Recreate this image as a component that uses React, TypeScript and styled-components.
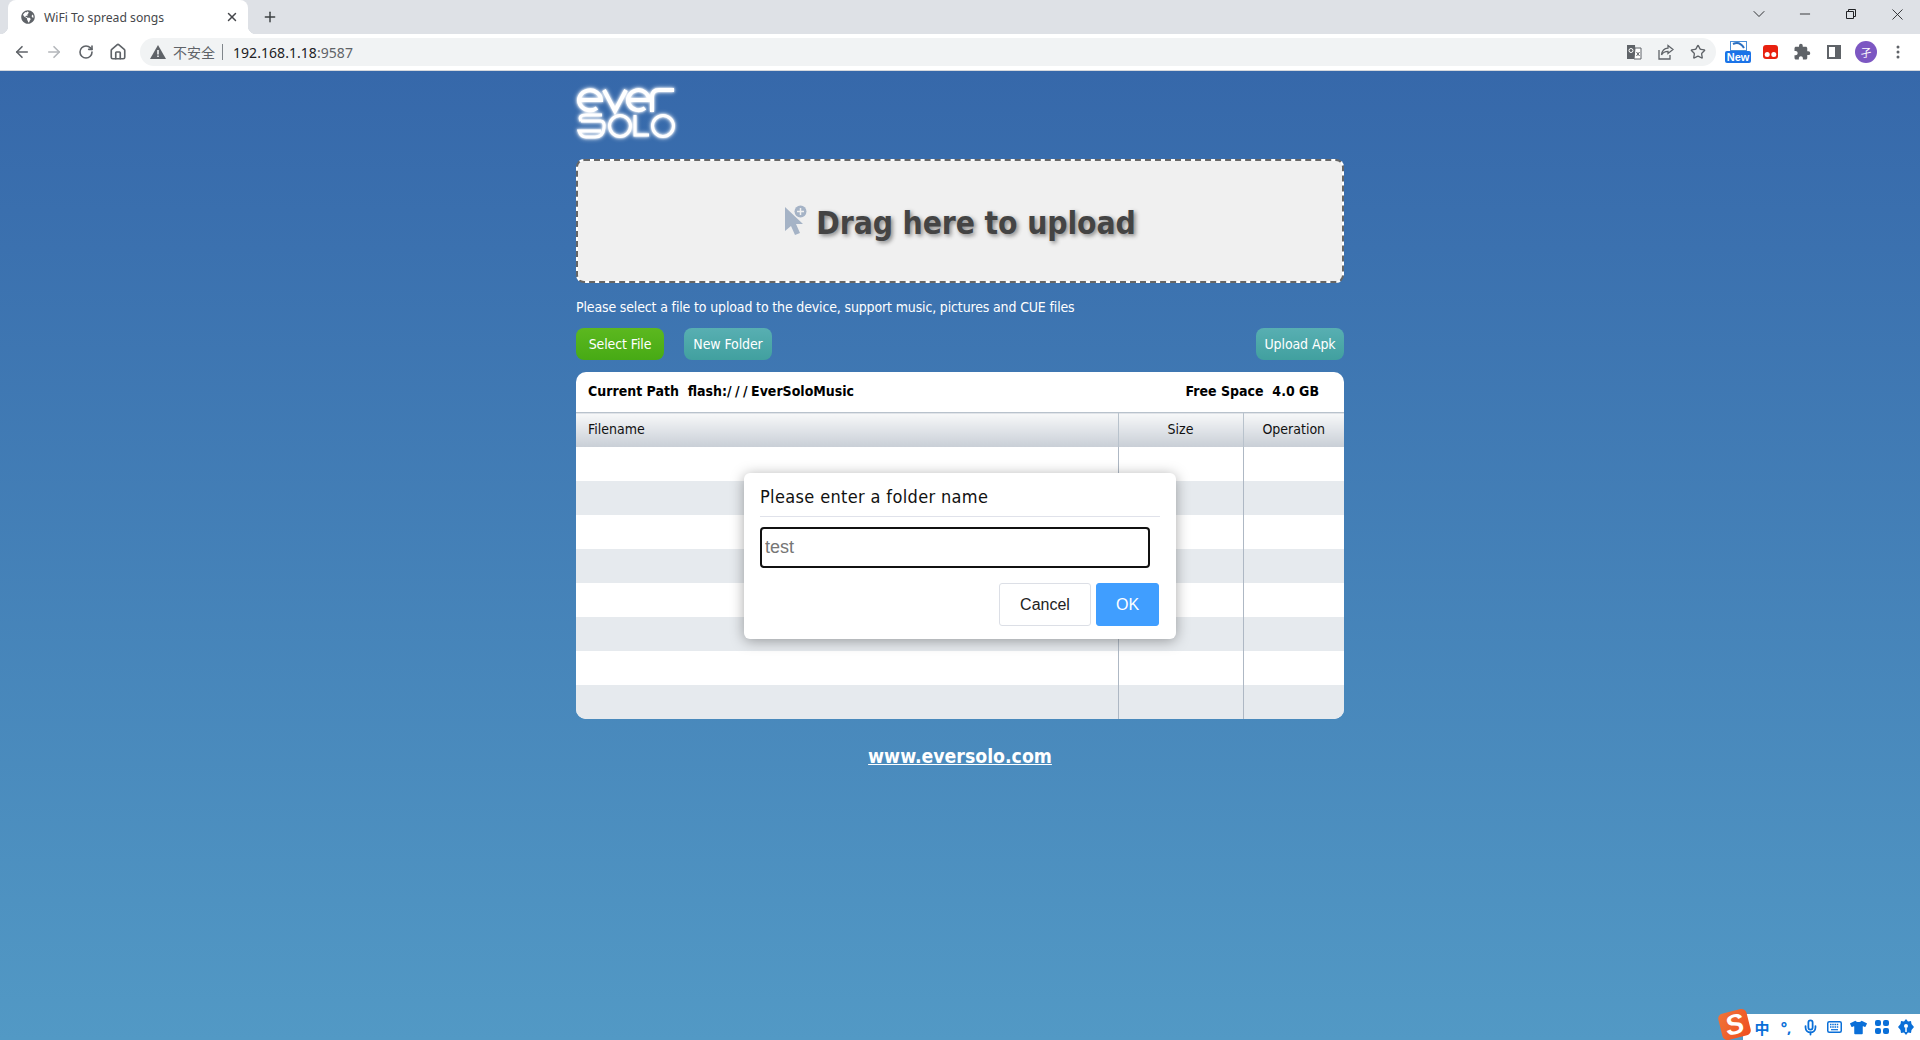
import React from 'react';
import styled, { createGlobalStyle } from 'styled-components';
import { ArrowLeft, ArrowRight, RotateCw, Home, Star, X, Plus, Minus, ChevronDown, Mic } from 'lucide-react';
import { FaGlobeAmericas, FaTshirt } from 'react-icons/fa';
import { MdExtension } from 'react-icons/md';

const GlobalStyle = createGlobalStyle`
	html, body {
		margin: 0;
		padding: 0;
		height: 100%;
		overflow: hidden;
	}
	#root {
		height: 100%;
	}
`;

const pageFont = `'DejaVu Sans', Tahoma, sans-serif`;
const chromeFont = `'Noto Sans', 'Noto Sans CJK SC', sans-serif`;
const arialFont = `'Liberation Sans', Arial, sans-serif`;

const Screen = styled.div`
	display: flex;
	flex-direction: column;
	height: 1040px;
	position: relative;
`;

/* browser chrome */
const TabStrip = styled.div`
	background: #dee1e6;
	display: flex;
	align-items: center;
	height: 34px;
	flex: none;
`;
const Tab = styled.div`
	align-self: stretch;
	background: #fff;
	border-radius: 8px 8px 0 0;
	color: #45474b;
	display: flex;
	align-items: center;
	font: 12.2px ${chromeFont};
	margin-left: 8px;
	padding: 0 9px 0 13px;
	position: relative;
	width: 218px;
	&::before,
	&::after {
		bottom: 0;
		content: '';
		height: 8px;
		position: absolute;
		width: 8px;
	}
	&::before {
		background: radial-gradient(circle at 0 0, #dee1e6 8px, #fff 8.5px);
		left: -8px;
	}
	&::after {
		background: radial-gradient(circle at 100% 0, #dee1e6 8px, #fff 8.5px);
		right: -8px;
	}
`;
const TabTitle = styled.span`
	flex: 1;
	margin-left: 9px;
`;
const NewTab = styled.div`
	color: #3c4043;
	display: flex;
	margin-left: 14px;
`;
const WindowControls = styled.div`
	align-self: flex-start;
	display: flex;
	margin-left: auto;
`;
const WindowButton = styled.div`
	align-items: center;
	color: #202124;
	display: flex;
	height: 28px;
	justify-content: center;
	width: 46px;
`;
const Toolbar = styled.div`
	align-items: center;
	background: #fff;
	border-bottom: 1px solid #d5d8dd;
	display: flex;
	flex: none;
	height: 36px;
	padding: 0 6px;
`;
const ToolButton = styled.div<{ $muted?: boolean }>`
	align-items: center;
	color: ${(p) => (p.$muted ? '#b4b7bb' : '#5f6368')};
	display: flex;
	flex: none;
	height: 28px;
	justify-content: center;
	width: 32px;
`;
const Omnibox = styled.div`
	align-items: center;
	background: #f1f3f4;
	border-radius: 14px;
	display: flex;
	flex: 1;
	font: 14px ${chromeFont};
	height: 28px;
	margin: 0 6px;
	padding: 0 2px 0 10px;
`;
const InsecureLabel = styled.span`
	color: #5f6368;
	font-size: 14px;
	margin-left: 7px;
`;
const OmniDivider = styled.span`
	background: #80868b;
	height: 16px;
	margin: 0 10px 0 7px;
	width: 1px;
`;
const Host = styled.span`
	color: #202124;
	letter-spacing: 0.05px;
`;
const Port = styled.span`
	color: #5f6368;
	flex: 1;
	letter-spacing: 0.05px;
`;
const NewBadge = styled.div`
	align-items: center;
	display: flex;
	flex-direction: column;
	position: relative;
	width: 26px;
`;
const NewBadgeLabel = styled.span`
	background: #1a73e8;
	border-radius: 2px;
	color: #fff;
	font: bold 11px/12px ${arialFont};
	text-align: center;
	width: 26px;
`;
const Avatar = styled.div`
	align-items: center;
	background: #7c57c2;
	border-radius: 50%;
	color: #fff;
	display: flex;
	font: 11px ${chromeFont};
	height: 22px;
	justify-content: center;
	width: 22px;
`;

/* page */
const Page = styled.main`
	background: linear-gradient(#3668aa, #5299c5);
	flex: 1;
	font-family: ${pageFont};
`;
const Container = styled.div`
	margin: 0 auto;
	width: 768px;
`;
const LogoRow = styled.div`
	align-items: flex-end;
	display: flex;
	height: 88px;
`;
const LogoSvg = styled.svg`
	display: block;
	filter: drop-shadow(0 0 1px #fff) drop-shadow(0 0 2px rgba(255, 255, 255, 0.75));
	margin-bottom: 20px;
`;
const DropZone = styled.div`
	align-items: center;
	background: linear-gradient(#f0f0f0, #f0f0f0) padding-box, #fff border-box;
	border: 2px dashed #666;
	border-radius: 8px;
	box-sizing: border-box;
	display: flex;
	height: 124px;
	justify-content: center;
`;
const DropText = styled.span`
	color: #444;
	font-size: 31.5px;
	font-stretch: condensed;
	font-weight: bold;
	letter-spacing: -0.1px;
	margin-left: 9px;
	padding-top: 4px;
	text-shadow: 2px 2px 4px #888;
`;
const DropIcon = styled.svg`
	display: block;
	margin-top: -3px;
`;
const Description = styled.p`
	color: #fff;
	font-size: 14px;
	font-stretch: condensed;
	letter-spacing: -0.15px;
	line-height: 20px;
	margin: 14px 0 11px;
`;
const ButtonRow = styled.div`
	display: flex;
	gap: 20px;
`;
const ActionButton = styled.button<{ $variant: 'green' | 'teal'; $right?: boolean }>`
	background: ${(p) =>
		p.$variant === 'green'
			? 'linear-gradient(#5cb81f, #47aa15)'
			: 'linear-gradient(#58afb2, #41a09f)'};
	border: 0;
	border-radius: 8px;
	color: #fff;
	font-family: ${pageFont};
	font-size: 14px;
	font-stretch: condensed;
	height: 32px;
	letter-spacing: -0.1px;
	margin-left: ${(p) => (p.$right ? 'auto' : '0')};
	padding: 0 0 1px;
	width: 88px;
`;
const FilePanel = styled.section`
	background: #fff;
	border-radius: 10px;
	margin-top: 12px;
	overflow: hidden;
`;
const PathBar = styled.div`
	align-items: center;
	box-sizing: border-box;
	color: #000;
	display: flex;
	font-size: 14px;
	font-stretch: condensed;
	font-weight: bold;
	height: 40px;
	justify-content: space-between;
	padding: 0 25px 2px 12px;
	white-space: pre;
`;
const Slashes = styled.span`
	letter-spacing: 3.4px;
`;
const FileTable = styled.table`
	border-collapse: collapse;
	table-layout: fixed;
	width: 100%;
`;
const HeadCell = styled.th<{ $first?: boolean }>`
	background: linear-gradient(#f7f8f9, #c8ced6);
	border-left: ${(p) => (p.$first ? '0' : '1px solid #b8c2cc')};
	border-top: 1px solid #b8c2cc;
	box-sizing: border-box;
	color: #111;
	font-size: 14px;
	font-stretch: condensed;
	font-weight: normal;
	height: 34px;
	padding: 0 0 1px ${(p) => (p.$first ? '12px' : '0')};
	text-align: ${(p) => (p.$first ? 'left' : 'center')};
`;
const Row = styled.tr<{ $shaded: boolean }>`
	background: ${(p) => (p.$shaded ? '#e6eaee' : '#fff')};
`;
const Cell = styled.td<{ $first?: boolean }>`
	border-left: ${(p) => (p.$first ? '0' : '1px solid #aeb8c4')};
	height: 34px;
	padding: 0;
`;
const Footer = styled.div`
	margin-top: 26px;
	text-align: center;
`;
const SiteLink = styled.a`
	color: #fff;
	font-size: 19.3px;
	font-stretch: condensed;
	font-weight: bold;
	text-decoration: underline;
`;

/* dialog */
const Dialog = styled.div`
	background: #fff;
	border-radius: 6px;
	box-shadow: 0 2px 14px rgba(0, 0, 0, 0.35);
	box-sizing: border-box;
	height: 166px;
	left: 744px;
	padding: 0 16px;
	position: absolute;
	top: 473px;
	width: 432px;
`;
const DialogTitle = styled.div`
	border-bottom: 1px solid #e0e2ea;
	color: #111;
	font-family: ${pageFont};
	font-size: 18px;
	font-stretch: condensed;
	height: 43px;
	letter-spacing: 0.35px;
	line-height: 48px;
`;
const NameInput = styled.input`
	border: 2px solid #111;
	border-radius: 4px;
	box-sizing: border-box;
	color: #767676;
	display: block;
	font: 18px ${arialFont};
	height: 41px;
	margin-top: 10px;
	outline: 0;
	padding: 0 3px;
	width: 390px;
`;
const DialogActions = styled.div`
	display: flex;
	gap: 5px;
	justify-content: flex-end;
	margin-top: 15px;
	padding-right: 1px;
`;
const DialogButton = styled.button<{ $primary?: boolean }>`
	background: ${(p) => (p.$primary ? '#409eff' : '#fff')};
	border: 1px solid ${(p) => (p.$primary ? '#409eff' : '#dcdfe6')};
	border-radius: 3px;
	color: ${(p) => (p.$primary ? '#fff' : '#222')};
	font: 16px ${arialFont};
	height: 43px;
	padding: 0;
	width: ${(p) => (p.$primary ? '63px' : '92px')};
`;

/* input method bar */
const ImeBar = styled.div`
	align-items: center;
	background: #fff;
	border-radius: 4px 0 0 0;
	bottom: 0;
	color: #0a6fd8;
	display: flex;
	height: 26px;
	padding-left: 7px;
	position: absolute;
	right: 0;
	width: 170px;
`;
const ImeItem = styled.span`
	align-items: center;
	display: flex;
	flex: none;
	font: bold 15px ${chromeFont};
	height: 24px;
	justify-content: center;
	width: 24px;
`;
const ImeLogo = styled.div`
	align-items: center;
	background: linear-gradient(135deg, #f0743a, #ef4e1d);
	border-radius: 5px;
	bottom: 2px;
	color: #fff;
	display: flex;
	font: italic bold 28px/28px ${arialFont};
	height: 27px;
	justify-content: center;
	position: absolute;
	right: 171px;
	transform: rotate(-14deg);
	width: 29px;
`;

const Logo = () => (
	<LogoSvg width="100" height="54" viewBox="0 0 100 54" fill="none" stroke="#fff" strokeWidth="4">
		<path d="M3 15h22a11 10 0 1 0-4 8" />
		<path d="M28 5l11 21 11-21" />
		<path d="M53 15h20a10.500 10 0 1 0-4 8" />
		<path d="M76 27V12q0-7 7-7h15" />
		<path d="M5 36h20M5 36q-3-6 5-6h16M25 36q4 1 3 7-1 9-9 9H10q-5 0-7-6h22" strokeWidth="3" />
		<circle cx="44" cy="41" r="10.500" strokeWidth="3" />
		<path d="M59 30v20h14" strokeWidth="3" />
		<circle cx="87" cy="41" r="10.500" strokeWidth="3" />
	</LogoSvg>
);

const CursorPlus = () => (
	<DropIcon width="23" height="30" viewBox="0 0 23 30">
		<path d="M1 2v24l6-5 4 9 5-2-4-9h7z" fill="#a5b3c6" />
		<circle cx="16.500" cy="6.500" r="6" fill="#a5b3c6" />
		<path d="M16.500 3v7M13 6.500h7" stroke="#f0f0f0" strokeWidth="1.500" />
	</DropIcon>
);

const WarningIcon = () => (
	<svg width="16" height="14" viewBox="0 0 16 14">
		<path d="M8 0l8 14H0z" fill="#5f6368" />
		<path d="M7.200 5h1.600v4.500H7.200zM7.200 10.500h1.600V12H7.200z" fill="#f1f3f4" />
	</svg>
);

const TranslateIcon = () => (
	<svg width="16" height="16" viewBox="0 0 16 16">
		<path d="M1 1h8l1 14H1z" fill="#5f6368" />
		<path d="M9 4h6v11H8z" fill="#fff" stroke="#5f6368" />
		<circle cx="5" cy="6.500" r="2" fill="none" stroke="#fff" />
		<path d="M10.500 8l3 4M13.500 8l-3 4" stroke="#5f6368" />
	</svg>
);

const ShareIcon = () => (
	<svg width="16" height="16" viewBox="0 0 16 16" fill="none" stroke="#5f6368" strokeWidth="1.300">
		<path d="M1 6v9h11v-4" />
		<path d="M10 1.500l5 4-5 4V7.300c-3 0-5 1-6.500 3.500.5-4 3-6.500 6.500-6.700z" />
	</svg>
);

const RestoreIcon = () => (
	<svg width="10" height="10" viewBox="0 0 10 10" fill="none" stroke="#202124">
		<path d="M.5 2.500h7v7h-7zM2.500 2.500v-2h7v7h-2" />
	</svg>
);

const PanelIcon = () => (
	<svg width="14" height="14" viewBox="0 0 14 14">
		<path fillRule="evenodd" d="M0 0h14v14H0zM2 2v10h6V2z" fill="#5f6368" />
	</svg>
);

const RedExtension = () => (
	<svg width="15" height="14" viewBox="0 0 15 14">
		<rect width="15" height="14" rx="3" fill="#e8210f" />
		<circle cx="4.200" cy="9.500" r="2.500" fill="#fff" />
		<circle cx="10.800" cy="9.500" r="2.500" fill="#fff" />
	</svg>
);

const NewExtensionTop = () => (
	<svg width="17" height="10" viewBox="0 0 17 10">
		<rect x=".5" y=".5" width="16" height="9" fill="#fff" stroke="#4a8fd8" />
		<path d="M3 3c4-2 8-1 11 4" fill="none" stroke="#2a6fc0" strokeWidth="2" />
	</svg>
);

const DotsIcon = () => (
	<svg width="4" height="14" viewBox="0 0 4 14" fill="#5f6368">
		<circle cx="2" cy="2" r="1.500" />
		<circle cx="2" cy="7" r="1.500" />
		<circle cx="2" cy="12" r="1.500" />
	</svg>
);

const ImeKeyboard = () => (
	<svg width="15" height="12" viewBox="0 0 15 12">
		<rect x=".75" y=".75" width="13.500" height="10.500" rx="1.500" fill="#fff" stroke="#0a6fd8" strokeWidth="1.500" />
		<path d="M3 3.500h9M3 6h9" stroke="#0a6fd8" strokeWidth="1.500" strokeDasharray="1.500 .75" />
		<path d="M4 8.700h7" stroke="#0a6fd8" strokeWidth="1.200" />
	</svg>
);

const ImeGrid = () => (
	<svg width="14" height="14" viewBox="0 0 14 14" fill="#0a6fd8">
		<rect width="6" height="6" rx="2" />
		<rect x="8" width="6" height="6" rx="2" />
		<rect y="8" width="6" height="6" rx="2" />
		<rect x="8" y="8" width="6" height="6" rx="2" />
	</svg>
);

const ImeGear = () => (
	<svg width="16" height="16" viewBox="0 0 16 16">
		<path d="M8 0l2 2.500 3-.5.500 3L16 8l-2.500 3-.5 3-3-.5L8 16l-2-2.500-3 .5-.5-3L0 8l2.500-3L3 2l3 .5z" fill="#0a6fd8" />
		<circle cx="8" cy="7" r="2" fill="#fff" />
		<path d="M8 9v4" stroke="#fff" strokeWidth="1.500" />
	</svg>
);

const rows = Array.from({ length: 8 }, (_, i) => i);

const App: React.FC = () => (
	<Screen>
		<GlobalStyle />
		<TabStrip>
			<Tab>
				<FaGlobeAmericas size={14} color="#5f6368" />
				<TabTitle>WiFi To spread songs</TabTitle>
				<X size={14} color="#45474b" strokeWidth={2.5} />
			</Tab>
			<NewTab>
				<Plus size={16} strokeWidth={2.2} />
			</NewTab>
			<WindowControls>
				<WindowButton>
					<ChevronDown size={20} strokeWidth={1.1} />
				</WindowButton>
				<WindowButton>
					<Minus size={16} strokeWidth={1.3} />
				</WindowButton>
				<WindowButton>
					<RestoreIcon />
				</WindowButton>
				<WindowButton>
					<X size={19} strokeWidth={1.1} />
				</WindowButton>
			</WindowControls>
		</TabStrip>
		<Toolbar>
			<ToolButton>
				<ArrowLeft size={18} strokeWidth={2.2} />
			</ToolButton>
			<ToolButton $muted>
				<ArrowRight size={18} strokeWidth={2.2} />
			</ToolButton>
			<ToolButton>
				<RotateCw size={16} strokeWidth={2.4} />
			</ToolButton>
			<ToolButton>
				<Home size={18} strokeWidth={2.2} />
			</ToolButton>
			<Omnibox>
				<WarningIcon />
				<InsecureLabel>不安全</InsecureLabel>
				<OmniDivider />
				<Host>192.168.1.18</Host>
				<Port>:9587</Port>
				<ToolButton>
					<TranslateIcon />
				</ToolButton>
				<ToolButton>
					<ShareIcon />
				</ToolButton>
				<ToolButton>
					<Star size={16} strokeWidth={2} />
				</ToolButton>
			</Omnibox>
			<ToolButton>
				<NewBadge>
					<NewExtensionTop />
					<NewBadgeLabel>New</NewBadgeLabel>
				</NewBadge>
			</ToolButton>
			<ToolButton>
				<RedExtension />
			</ToolButton>
			<ToolButton>
				<MdExtension size={18} />
			</ToolButton>
			<ToolButton>
				<PanelIcon />
			</ToolButton>
			<ToolButton>
				<Avatar>孑</Avatar>
			</ToolButton>
			<ToolButton>
				<DotsIcon />
			</ToolButton>
		</Toolbar>
		<Page>
			<Container>
				<LogoRow>
					<Logo />
				</LogoRow>
				<DropZone>
					<CursorPlus />
					<DropText>Drag here to upload</DropText>
				</DropZone>
				<Description>
					Please select a file to upload to the device, support music, pictures and CUE files
				</Description>
				<ButtonRow>
					<ActionButton $variant="green">Select File</ActionButton>
					<ActionButton $variant="teal">New Folder</ActionButton>
					<ActionButton $variant="teal" $right>
						Upload Apk
					</ActionButton>
				</ButtonRow>
				<FilePanel>
					<PathBar>
						<span>
							Current Path  flash:<Slashes>///</Slashes>EverSoloMusic
						</span>
						<span>Free Space  4.0 GB</span>
					</PathBar>
					<FileTable>
						<colgroup>
							<col />
							<col width="125" />
							<col width="101" />
						</colgroup>
						<thead>
							<tr>
								<HeadCell $first>Filename</HeadCell>
								<HeadCell>Size</HeadCell>
								<HeadCell>Operation</HeadCell>
							</tr>
						</thead>
						<tbody>
							{rows.map((i) => (
								<Row key={i} $shaded={i % 2 === 1}>
									<Cell $first />
									<Cell />
									<Cell />
								</Row>
							))}
						</tbody>
					</FileTable>
				</FilePanel>
				<Footer>
					<SiteLink href="#">www.eversolo.com</SiteLink>
				</Footer>
			</Container>
		</Page>
		<Dialog>
			<DialogTitle>Please enter a folder name</DialogTitle>
			<NameInput defaultValue="test" />
			<DialogActions>
				<DialogButton>Cancel</DialogButton>
				<DialogButton $primary>OK</DialogButton>
			</DialogActions>
		</Dialog>
		<ImeBar>
			<ImeItem>中</ImeItem>
			<ImeItem>°,</ImeItem>
			<ImeItem>
				<Mic size={17} strokeWidth={2.5} />
			</ImeItem>
			<ImeItem>
				<ImeKeyboard />
			</ImeItem>
			<ImeItem>
				<FaTshirt size={17} />
			</ImeItem>
			<ImeItem>
				<ImeGrid />
			</ImeItem>
			<ImeItem>
				<ImeGear />
			</ImeItem>
		</ImeBar>
		<ImeLogo>S</ImeLogo>
	</Screen>
);

export default App;
